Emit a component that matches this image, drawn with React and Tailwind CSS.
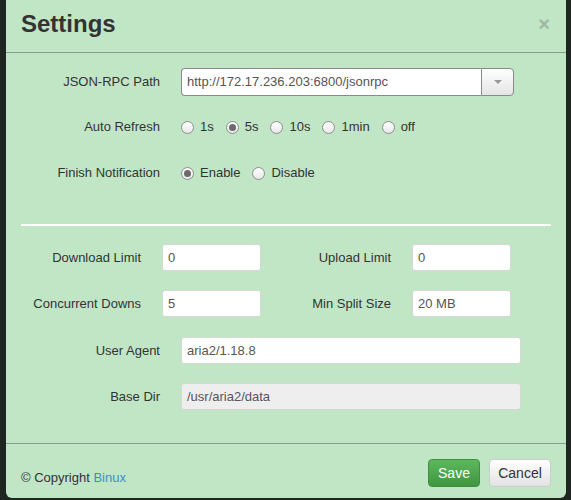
import React from 'react';

const font = { fontFamily: '"Liberation Sans", Arial, sans-serif' };

const Radio = ({ checked }) => (
  <span className="w-[13px] h-[13px] rounded-full border border-[#8e8e8e] bg-gradient-to-b from-white to-[#e8e8e8] flex items-center justify-center shrink-0">
    {checked && <span className="w-[7px] h-[7px] rounded-full bg-[#6b6b6b]"></span>}
  </span>
);

const RadioGroup = ({ options, value }) => (
  <div className="flex items-center gap-[12px]">
    {options.map(opt => (
      <label key={opt} className="flex items-center gap-[6px]">
        <Radio checked={opt === value} />
        <span>{opt}</span>
      </label>
    ))}
  </div>
);

const TextInput = ({ value, width, disabled }) => (
  <div
    className={`h-[27px] ${width} rounded-[3px] border border-[#d4d8d4] flex items-center px-[5px] text-[#555] ${disabled ? 'bg-[#eeeeee]' : 'bg-white'}`}
  >
    {value}
  </div>
);

const App = () => {
  return (
    <div className="w-[571px] h-[500px] bg-[#1f2521] overflow-hidden pl-[6px] text-[13px] text-[#333]" style={font}>
      <div className="w-[560px] h-[498px] bg-[#c1e6c6] rounded-b-[6px] flex flex-col">
        {/* header */}
        <div className="h-[53px] border-b border-[#8c9a8d] px-[15px] pt-[8px] flex justify-between items-start shrink-0">
          <h3 className="text-[24px] leading-[32px] font-bold text-[#333]">Settings</h3>
          <span className="text-[20px] leading-[20px] font-bold text-[#9fb8a2] mt-[6px] mr-px">×</span>
        </div>

        {/* body */}
        <div className="flex-1 px-[15px]">
          <div className="flex items-center h-[28px] mt-[15px]">
            <div className="w-[139px] text-right">JSON-RPC Path</div>
            <div className="ml-[21px] flex h-[28px]">
              <div className="w-[300px] bg-white border border-[#8a8a8a] border-r-0 rounded-l-[4px] flex items-center px-[5px] text-[#555]">
                http://172.17.236.203:6800/jsonrpc
              </div>
              <div className="w-[33px] border border-[#8a8a8a] rounded-r-[4px] bg-gradient-to-b from-white to-[#e4e4e4] flex items-center justify-center">
                <span className="w-0 h-0 border-l-[4px] border-r-[4px] border-t-[4px] border-l-transparent border-r-transparent border-t-[#999]"></span>
              </div>
            </div>
          </div>

          <div className="flex items-center h-[28px] mt-[17px]">
            <div className="w-[139px] text-right">Auto Refresh</div>
            <div className="ml-[21px]">
              <RadioGroup options={['1s', '5s', '10s', '1min', 'off']} value="5s" />
            </div>
          </div>

          <div className="flex items-center h-[28px] mt-[18px]">
            <div className="w-[139px] text-right">Finish Notification</div>
            <div className="ml-[21px]">
              <RadioGroup options={['Enable', 'Disable']} value="Enable" />
            </div>
          </div>

          <div className="h-[2px] bg-white mt-[37px]"></div>

          <div className="flex items-center mt-[18px]">
            <div className="w-[120px] text-right">Download Limit</div>
            <div className="ml-[21px]"><TextInput value="0" width="w-[99px]" /></div>
            <div className="w-[130px] text-right">Upload Limit</div>
            <div className="ml-[21px]"><TextInput value="0" width="w-[99px]" /></div>
          </div>

          <div className="flex items-center mt-[19px]">
            <div className="w-[120px] text-right">Concurrent Downs</div>
            <div className="ml-[21px]"><TextInput value="5" width="w-[99px]" /></div>
            <div className="w-[130px] text-right">Min Split Size</div>
            <div className="ml-[21px]"><TextInput value="20 MB" width="w-[99px]" /></div>
          </div>

          <div className="flex items-center mt-[20px]">
            <div className="w-[139px] text-right">User Agent</div>
            <div className="ml-[21px]"><TextInput value="aria2/1.18.8" width="w-[340px]" /></div>
          </div>

          <div className="flex items-center mt-[19px]">
            <div className="w-[139px] text-right">Base Dir</div>
            <div className="ml-[21px]"><TextInput value="/usr/aria2/data" width="w-[340px]" disabled /></div>
          </div>
        </div>

        {/* footer */}
        <div className="h-[55px] border-t border-[#8c9a8d] px-[15px] pt-[15px] flex justify-between items-start shrink-0">
          <div className="mt-[9px]">
            © Copyright <span className="text-[#428bca]">Binux</span>
          </div>
          <div className="flex gap-[9px]">
            <button className="h-[28px] w-[52px] rounded-[4px] border border-[#3e8f3e] bg-gradient-to-b from-[#5cb85c] to-[#419641] text-white text-[14px]">
              Save
            </button>
            <button className="h-[28px] w-[62px] rounded-[4px] border border-[#cccccc] bg-gradient-to-b from-white to-[#e2e2e2] text-[#333] text-[14px]">
              Cancel
            </button>
          </div>
        </div>
      </div>
    </div>
  );
};

export default App;
